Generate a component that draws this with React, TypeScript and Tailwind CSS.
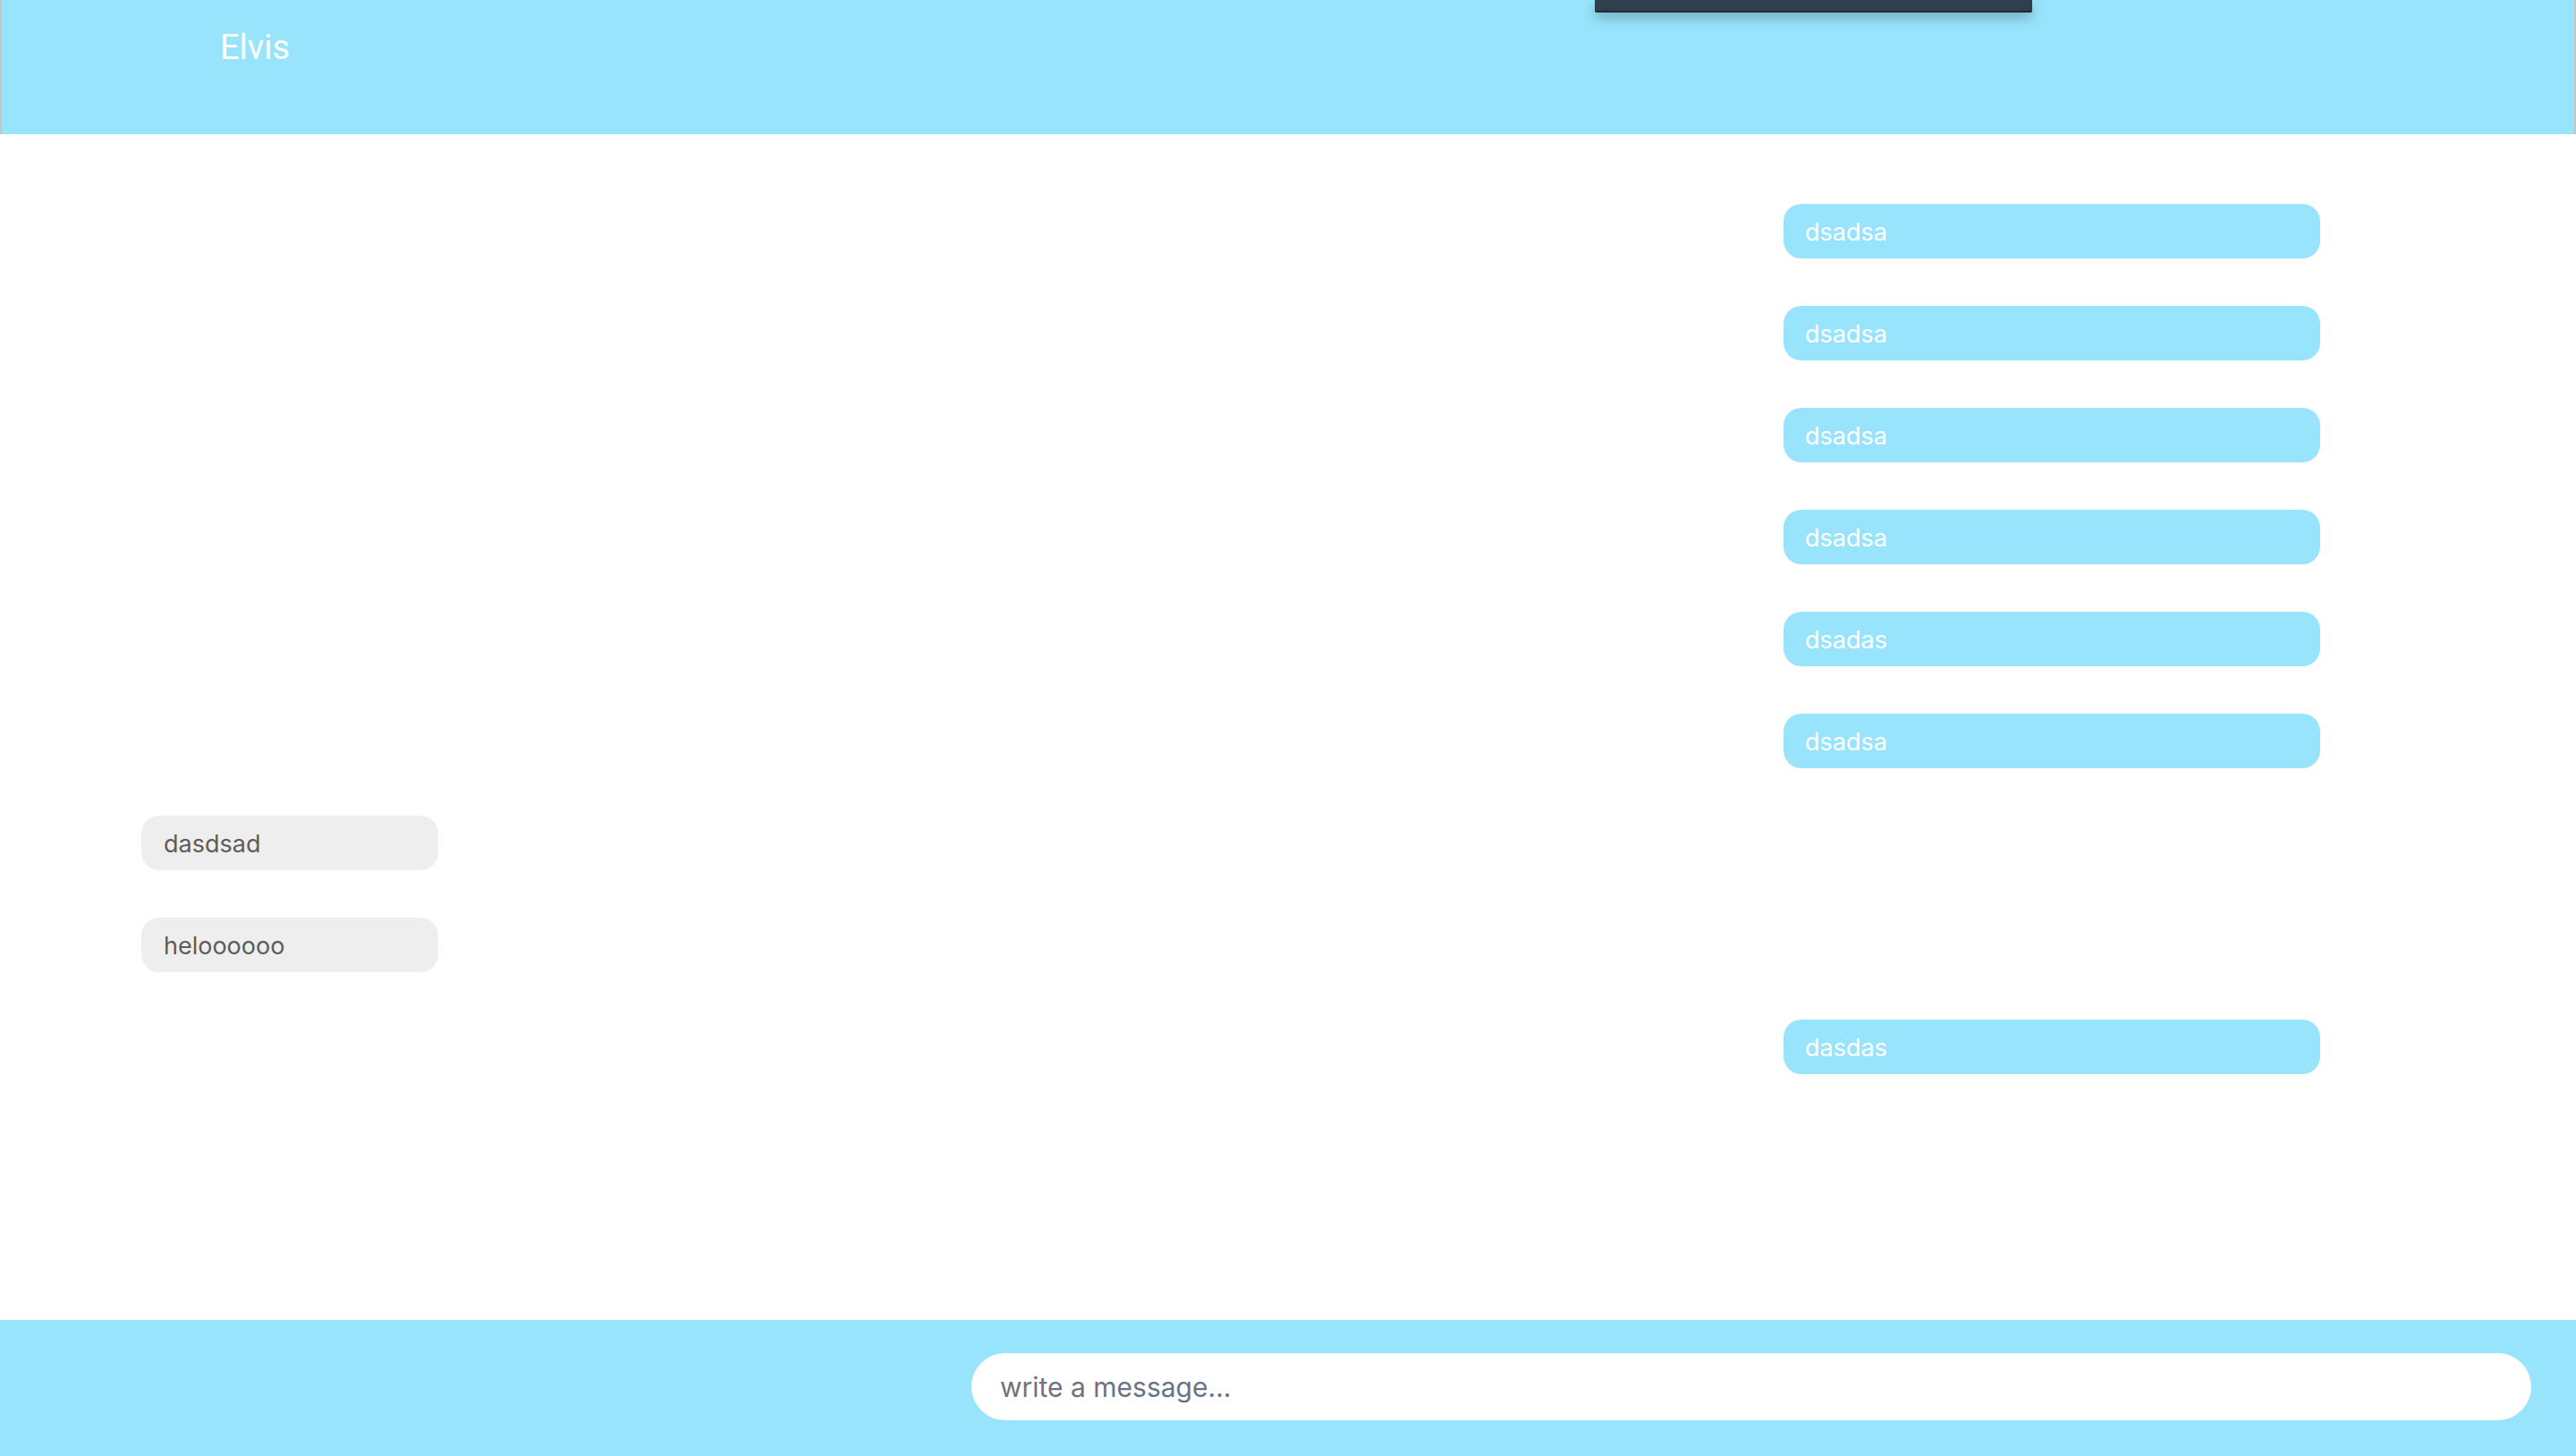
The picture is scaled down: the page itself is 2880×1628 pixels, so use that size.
import { useState } from "react"

type Msg = { id: number; text: string; mine: boolean }

const messages: Msg[] = [
  { id: 1, text: "dsadsa", mine: true },
  { id: 2, text: "dsadsa", mine: true },
  { id: 3, text: "dsadsa", mine: true },
  { id: 4, text: "dsadsa", mine: true },
  { id: 5, text: "dsadas", mine: true },
  { id: 6, text: "dsadsa", mine: true },
  { id: 7, text: "dasdsad", mine: false },
  { id: 8, text: "heloooooo", mine: false },
  { id: 9, text: "dasdas", mine: true },
]

export default function App() {
  return (
    <div className="relative flex h-screen flex-col bg-white font-['Inter','Liberation_Sans',sans-serif]">
      <Header name="Elvis" />
      <MessageList items={messages} />
      <Composer />
      <div className="absolute top-0 left-[1783px] h-[14px] w-[489px] rounded-b-[2px] border-b-2 border-[#1f2a35] bg-[#313e4c] shadow-[0_6px_14px_rgba(0,0,0,0.25)]" />
    </div>
  )
}

function Header({ name }: { name: string }) {
  return (
    <header className="h-[150px] shrink-0 border-x-2 border-[#c6c6c6] bg-[#98e4fc] pl-[244px] pt-[34px]">
      <h1 className="font-['Roboto','Liberation_Sans',sans-serif] text-[38px] leading-none text-white">
        {name}
      </h1>
    </header>
  )
}

function MessageList({ items }: { items: Msg[] }) {
  return (
    <main className="flex flex-1 flex-col gap-[53px] overflow-hidden pt-[78px] pl-[158px] pr-[286px]">
      {items.map((m) =>
        m.mine ? (
          <div
            key={m.id}
            className="flex h-[61px] w-[600px] shrink-0 items-center self-end rounded-[20px] bg-[#98e4fc] pl-[24px] pt-[3px] text-[27px] text-white"
          >
            {m.text}
          </div>
        ) : (
          <div
            key={m.id}
            className="flex h-[61px] w-[332px] shrink-0 items-center self-start rounded-[20px] bg-[#eeeeee] pl-[25px] pt-[3px] text-[27px] text-[#5c5c5c]"
          >
            {m.text}
          </div>
        )
      )}
    </main>
  )
}

function Composer() {
  const [text, setText] = useState("")

  return (
    <footer className="flex h-[152px] shrink-0 items-center justify-end bg-[#98e4fc] pr-[50px] pb-[4px]">
      <input
        value={text}
        onChange={(e) => setText(e.target.value)}
        placeholder="write a message..."
        className="h-[75px] w-[1744px] rounded-full bg-white pl-[32px] pt-[2px] text-[30px] text-[#374151] outline-none placeholder:text-[#6b7280]"
      />
    </footer>
  )
}
